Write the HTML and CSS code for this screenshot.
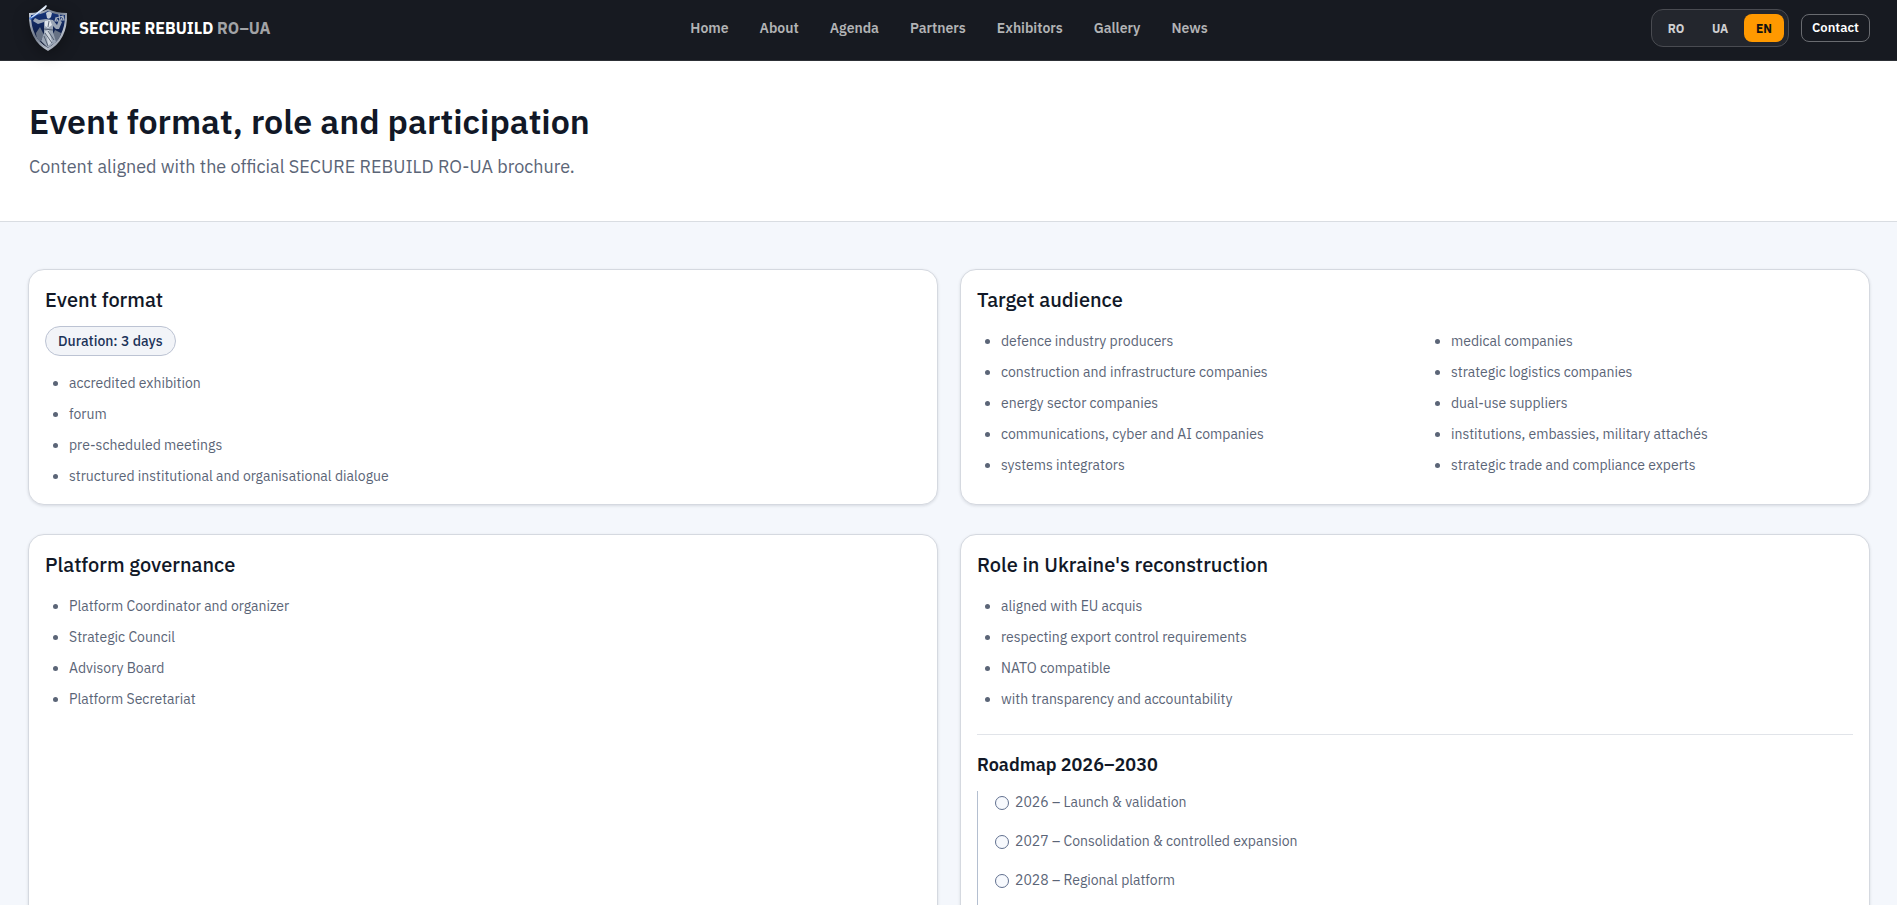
FILE: index.html
```html
<!DOCTYPE html>
<html lang="en">
<head>
  <meta charset="UTF-8">
  <meta name="viewport" content="width=device-width, initial-scale=1">
  <title>Event format, role and participation</title>
  <link rel="stylesheet" href="styles.css">
</head>
<body>

  <header class="site-header">
    <a class="brand" href="#">
      <svg class="brand-logo" viewBox="0 0 40 46" aria-hidden="true">
        <defs>
          <linearGradient id="steel" x1="0" y1="0" x2="1" y2="1">
            <stop offset="0" stop-color="#d3dae4"/>
            <stop offset="0.4" stop-color="#6f7989"/>
            <stop offset="0.7" stop-color="#b9c0cb"/>
            <stop offset="1" stop-color="#5f6774"/>
          </linearGradient>
          <linearGradient id="field" x1="0" y1="0" x2="0" y2="1">
            <stop offset="0" stop-color="#16357c"/>
            <stop offset="1" stop-color="#0a1026"/>
          </linearGradient>
        </defs>
        <!-- shield -->
        <path fill="url(#steel)" d="M1 8 Q12 8 20 4 Q28 8 39 8 Q40 35 20 46 Q0 35 1 8Z"/>
        <path fill="url(#field)" d="M3 10 Q13 10 20 6 Q27 10 37 10 Q37 33 20 43 Q3 33 3 10Z"/>
        <!-- figure -->
        <path fill="#667184" d="M12 22 L8 28 Q8 33 12 37 L16 30Z M27 25 L33 28 Q32 34 27 38 L24 31Z"/>
        <path fill="#9aa5b5" d="M16 17 L10 19 L5 16 L7 13 L11 15 L18 14 L25 15 L29 20 L31 15 L34 17 L31 24 L28 24 L25 21 L25 27 L28 37 L20 43 L13 36 L16 28Z"/>
        <path fill="#c3cbd6" d="M18 8 Q21 5 24 8 L23 12 Q21 15 19 13Z"/>
        <path fill="#dfe5ec" d="M17 16 L22 15 L24 20 L20 23 L17 21Z"/>
        <path fill="#ccd3dc" d="M17 26 L21 25 L24 37 L20 41 L19 33Z"/>
        <path fill="none" stroke="#3f4a5c" stroke-width="0.8" d="M16 24 L25 25 M17 28 L24 38 M16 31 L20 41 M20 26 L26 35 M21 16 L20 22"/>
        <!-- scales -->
        <path fill="none" stroke="#aab4c2" stroke-width="1.1" d="M28 13 L35 11 M31 9 L32 16 M28 13 L27 16 L30 16Z M35 11 L33 15 L36 15Z"/>
        <!-- sword -->
        <path fill="#2d64c8" d="M1 13 L11 6 L12 8 L2 15Z"/>
        <path fill="#e2ecfa" d="M1 14 L18 0 L19 1 L17 4 L5 12Z"/>
      </svg>
      <span>SECURE REBUILD <span class="brand-region">RO–UA</span></span>
    </a>

    <nav class="main-nav" aria-label="Main">
      <a href="#">Home</a>
      <a href="#">About</a>
      <a href="#">Agenda</a>
      <a href="#">Partners</a>
      <a href="#">Exhibitors</a>
      <a href="#">Gallery</a>
      <a href="#">News</a>
    </nav>

    <div class="header-actions">
      <div class="lang-switch">
        <button type="button">RO</button>
        <button type="button">UA</button>
        <button type="button" class="active">EN</button>
      </div>
      <a class="contact-btn" href="#">Contact</a>
    </div>
  </header>

  <section class="hero">
    <h1>Event format, role and participation</h1>
    <p>Content aligned with the official SECURE REBUILD RO-UA brochure.</p>
  </section>

  <main class="cards">
    <section class="card">
      <h2>Event format</h2>
      <span class="pill">Duration: 3 days</span>
      <ul>
        <li>accredited exhibition</li>
        <li>forum</li>
        <li>pre-scheduled meetings</li>
        <li>structured institutional and organisational dialogue</li>
      </ul>
    </section>

    <section class="card">
      <h2>Target audience</h2>
      <div class="two-cols">
        <ul>
          <li>defence industry producers</li>
          <li>construction and infrastructure companies</li>
          <li>energy sector companies</li>
          <li>communications, cyber and AI companies</li>
          <li>systems integrators</li>
        </ul>
        <ul>
          <li>medical companies</li>
          <li>strategic logistics companies</li>
          <li>dual-use suppliers</li>
          <li>institutions, embassies, military attachés</li>
          <li>strategic trade and compliance experts</li>
        </ul>
      </div>
    </section>

    <section class="card">
      <h2>Platform governance</h2>
      <ul>
        <li>Platform Coordinator and organizer</li>
        <li>Strategic Council</li>
        <li>Advisory Board</li>
        <li>Platform Secretariat</li>
      </ul>
    </section>

    <section class="card">
      <h2>Role in Ukraine's reconstruction</h2>
      <ul>
        <li>aligned with EU acquis</li>
        <li>respecting export control requirements</li>
        <li>NATO compatible</li>
        <li>with transparency and accountability</li>
      </ul>
      <hr>
      <h3>Roadmap 2026–2030</h3>
      <ol class="roadmap">
        <li>2026 – Launch &amp; validation</li>
        <li>2027 – Consolidation &amp; controlled expansion</li>
        <li>2028 – Regional platform</li>
      </ol>
    </section>
  </main>

</body>
</html>
```
FILE: styles.css
```css
:root {
  --bg-color: #f4f7fc;
  --header-color: #171a21;
  --text-color: #111827;
  --muted-color: #5b6577;
  --line-color: #d5d9e0;
  --accent-color: #ff9900;
}

* {
  box-sizing: border-box;
}

body {
  margin: 0;
  background: var(--bg-color);
  color: var(--text-color);
  font-family: "IBM Plex Sans", Roboto, sans-serif;
  font-size: 14px;
  line-height: 23px;
}

a {
  color: inherit;
  text-decoration: none;
}

.site-header {
  display: grid;
  grid-template-columns: 1fr auto 1fr;
  align-items: center;
  padding: 5px 27px 9px 28px;
  background: var(--header-color);
  border-bottom: 1px solid #2d3036;
}

.brand {
  display: flex;
  align-items: center;
  gap: 11px;
  color: #fff;
  font-size: 16px;
  font-weight: 700;
}

.brand-logo {
  width: 40px;
  height: 46px;
  filter: drop-shadow(0 4px 8px rgba(0, 0, 0, 0.35));
}

.brand-region {
  color: #a2a3a6;
}

.main-nav {
  display: flex;
  gap: 31px;
  color: #b2b3b5;
  font-size: 14px;
  font-weight: 600;
}

.main-nav a:hover {
  color: #fff;
}

.header-actions {
  display: flex;
  justify-content: flex-end;
  align-items: center;
  gap: 12px;
}

.lang-switch {
  display: flex;
  gap: 4px;
  padding: 4px;
  background: #23262d;
  border: 1px solid #494b51;
  border-radius: 12px;
}

.lang-switch button {
  width: 40px;
  height: 28px;
  padding: 0;
  background: none;
  border: none;
  border-radius: 8px;
  color: #cfd0d2;
  font: inherit;
  font-size: 12px;
  font-weight: 700;
  cursor: pointer;
}

.lang-switch button.active {
  background: var(--accent-color);
  color: #111;
}

.contact-btn {
  padding: 0 10px;
  border: 1px solid #696b70;
  border-radius: 8px;
  color: #fff;
  font-size: 13px;
  font-weight: 600;
  line-height: 26px;
}

.hero {
  padding: 38px 28px 40px 29px;
  background: #fff;
  border-bottom: 1px solid #d9dde2;
}

.hero h1 {
  margin: 0 0 10px;
  font-size: 34px;
  font-weight: 600;
  line-height: 44px;
}

.hero p {
  margin: 0;
  color: var(--muted-color);
  font-size: 18px;
  line-height: 28px;
}

.cards {
  display: grid;
  grid-template-columns: 1fr 1fr;
  gap: 29px 22px;
  padding: 47px 27px 48px 28px;
}

.card {
  padding: 16px;
  background: #fff;
  border: 1px solid var(--line-color);
  border-radius: 16px;
  box-shadow: 0 1px 3px rgba(17, 24, 39, 0.12);
}

.card h2 {
  margin: 0 0 12px;
  font-size: 20px;
  font-weight: 500;
  line-height: 28px;
}

.card h3 {
  margin: 0 0 12px;
  font-size: 18px;
  font-weight: 600;
  line-height: 28px;
}

.card ul {
  margin: 16px 0 0;
  padding-left: 24px;
  color: var(--muted-color);
}

.card li + li {
  margin-top: 8px;
}

.card hr {
  margin: 23px 0 16px;
  border: none;
  border-top: 1px solid #e1e4e9;
}

.pill {
  display: block;
  width: fit-content;
  padding: 0 12px;
  background: #f2f4f8;
  border: 1px solid #bcc3d3;
  border-radius: 15px;
  color: #1c3358;
  font-weight: 500;
  line-height: 28px;
}

.two-cols {
  display: grid;
  grid-template-columns: 1fr 1fr;
  column-gap: 24px;
  margin-top: -12px;
}

.card .roadmap {
  margin: 0;
  padding: 0 0 64px 17px;
  border-left: 1px solid #b4bfd0;
  color: var(--muted-color);
  list-style: none;
}

.roadmap li {
  display: flex;
  align-items: center;
  gap: 6px;
}

.card .roadmap li + li {
  margin-top: 16px;
}

.roadmap li::before {
  content: "";
  width: 12px;
  height: 12px;
  background: #f7f9fd;
  border: 1px solid #61708f;
  border-radius: 50%;
}

@media (max-width: 900px) {
  .site-header,
  .cards {
    grid-template-columns: 1fr;
  }

  .main-nav {
    flex-wrap: wrap;
  }
}
```
